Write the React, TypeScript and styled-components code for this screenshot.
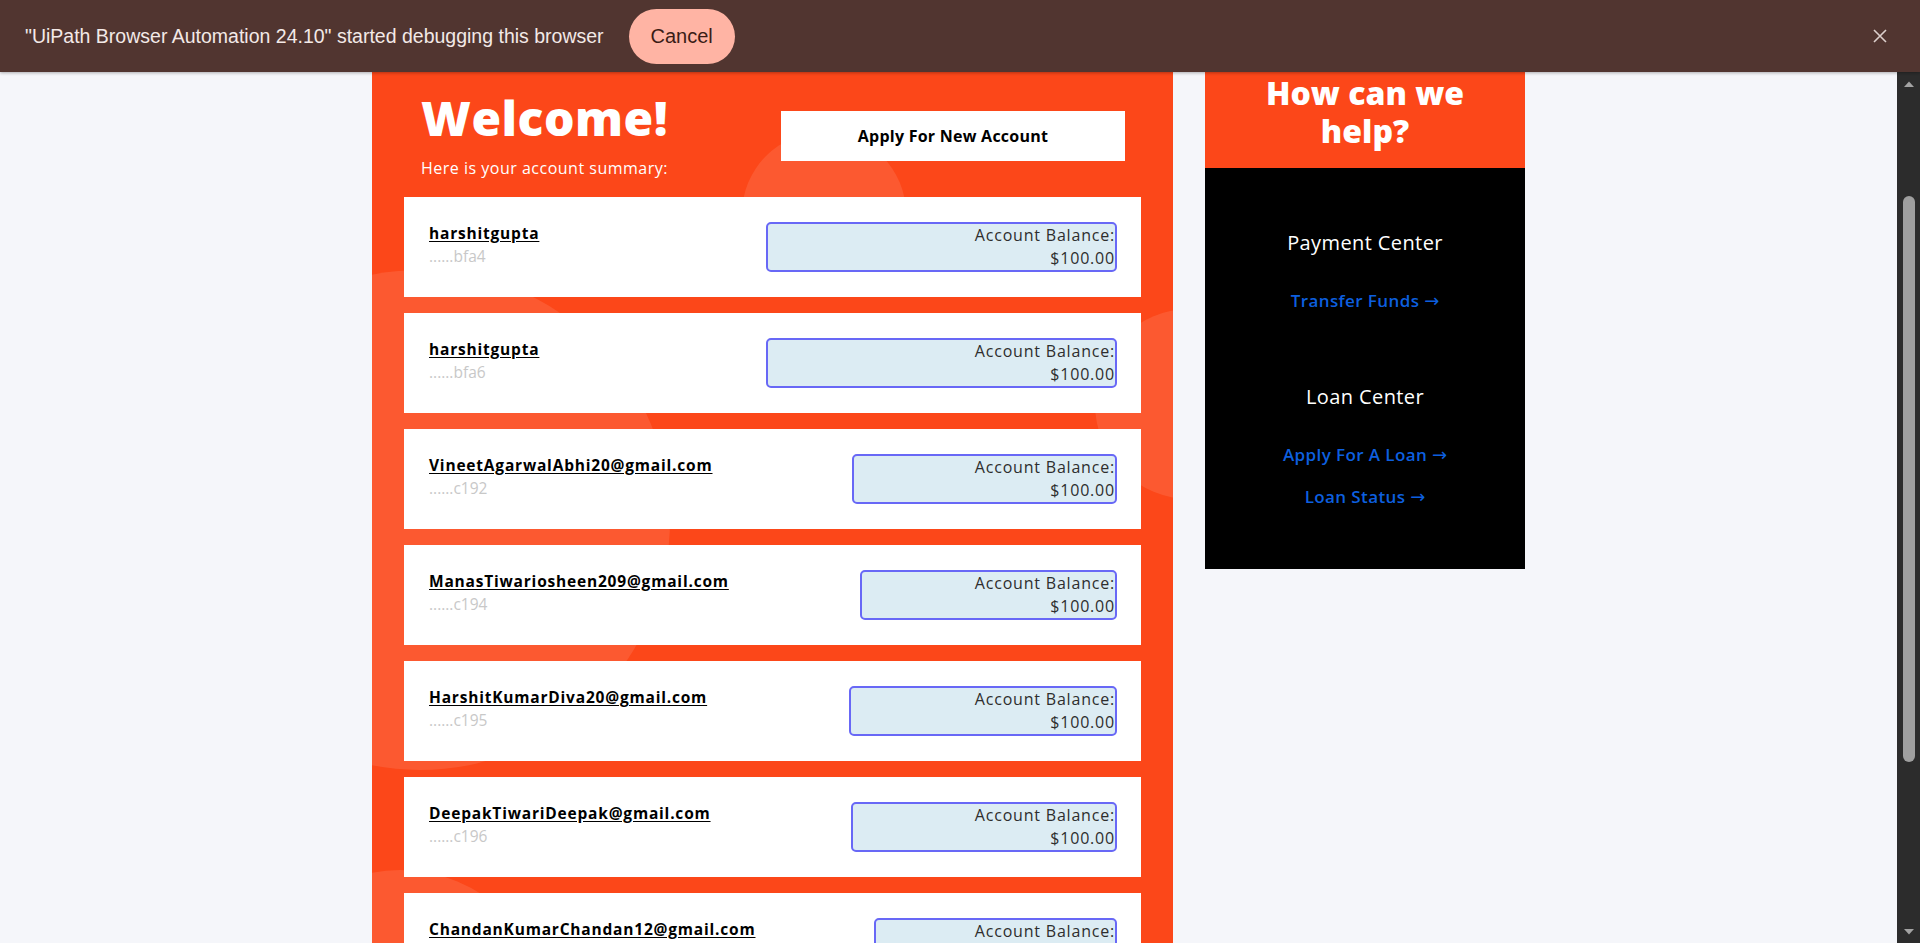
import React from "react";
import styled, { createGlobalStyle } from "styled-components";

const GlobalStyle = createGlobalStyle`
  html, body {
    margin: 0;
    padding: 0;
    height: 100%;
    overflow: hidden;
    background: #f5f6fa;
  }
  #root { height: 100%; }
  * { box-sizing: border-box; }
`;

const ORANGE = "#fc4719";
const UI_FONT = `"Open Sans", "Noto Sans", Arial, sans-serif`;

const Screen = styled.div`
  display: flex;
  flex-direction: column;
  height: 943px;
  width: 1920px;
`;

const InfoBar = styled.div`
  height: 72px;
  flex: none;
  background: #513530;
  display: flex;
  align-items: center;
  padding: 0 32px 0 25px;
  font-family: "Liberation Sans", Arial, sans-serif;
  font-size: 19.5px;
  color: #f3e9e7;
  position: relative;
  z-index: 2;
  box-shadow: 0 1px 3px rgba(0, 0, 0, 0.3);
`;

const InfoText = styled.span`
  white-space: nowrap;
`;

const CancelButton = styled.button`
  margin-left: 25px;
  width: 106px;
  height: 55px;
  border: none;
  border-radius: 28px;
  background: #ffb4a4;
  color: #3a1c16;
  font-family: "Liberation Sans", Arial, sans-serif;
  font-size: 20px;
  padding: 0;
`;

const CloseButton = styled.button`
  margin-left: auto;
  width: 16px;
  height: 16px;
  padding: 0;
  border: none;
  background: none;
  display: flex;
  align-items: center;
  justify-content: center;
`;

const Viewport = styled.div`
  flex: 1;
  display: flex;
  min-height: 0;
`;

const PageArea = styled.main`
  flex: 1;
  overflow: hidden;
  display: flex;
  justify-content: center;
  align-items: flex-start;
  gap: 32px;
  font-family: ${UI_FONT};
`;

const AccountsPanel = styled.section`
  width: 801px;
  flex: none;
  background: ${ORANGE};
  position: relative;
  overflow: hidden;
  padding: 18px 32px 60px 32px;
`;

const Bubble = styled.div<{ $x: number; $y: number; $size: number }>`
  position: absolute;
  left: ${(p) => p.$x}px;
  top: ${(p) => p.$y}px;
  width: ${(p) => p.$size}px;
  height: ${(p) => p.$size}px;
  border-radius: 50%;
  background: rgba(255, 255, 255, 0.1);
  pointer-events: none;
`;

const Header = styled.header`
  position: relative;
  display: flex;
  justify-content: space-between;
  align-items: flex-start;
  padding: 0 16px 0 17px;
`;

const Greeting = styled.div`
  color: #fff;
`;

const Title = styled.h1`
  margin: 0;
  font-size: 48px;
  line-height: 56px;
  font-weight: 800;
  letter-spacing: 0.5px;
`;

const Subtitle = styled.p`
  margin: 11px 0 0;
  font-size: 16px;
  line-height: 22px;
  font-weight: 400;
  letter-spacing: 0.5px;
`;

const NewAccountButton = styled.button`
  margin-top: 21px;
  width: 344px;
  height: 50px;
  border: none;
  background: #fff;
  color: #000;
  font-family: ${UI_FONT};
  font-size: 16px;
  font-weight: 700;
  letter-spacing: 0.25px;
  padding: 0;
`;

const CardList = styled.div`
  position: relative;
  margin-top: 18px;
  display: flex;
  flex-direction: column;
  gap: 16px;
`;

const Card = styled.div`
  background: #fff;
  height: 100px;
  padding: 25px 24px 25px 25px;
  display: flex;
  align-items: flex-start;
`;

const Owner = styled.div`
  flex: 1 1 auto;
  display: flex;
  flex-direction: column;
  align-items: flex-start;
  padding-right: 19px;
`;

const OwnerName = styled.a`
  font-size: 15.5px;
  line-height: 23px;
  font-weight: 700;
  letter-spacing: 0.8px;
  color: #000;
  text-decoration: underline;
  text-underline-offset: 2px;
  white-space: nowrap;
`;

const AccountId = styled.span`
  font-size: 15.5px;
  line-height: 23px;
  color: #c8c8c8;
`;

const Balance = styled.div`
  flex: 1 1 auto;
  border: 2px solid #6868f6;
  border-radius: 5px;
  background: #dcecf3;
  text-align: right;
  font-size: 16px;
  line-height: 23px;
  letter-spacing: 0.8px;
  color: #2e2e2e;
  white-space: nowrap;
`;

const Sidebar = styled.aside`
  width: 320px;
  flex: none;
`;

const HelpHeader = styled.div`
  background: ${ORANGE};
  color: #fff;
  text-align: center;
  font-size: 32px;
  line-height: 38px;
  font-weight: 800;
  padding: 2px 60px 18px;
`;

const HelpBody = styled.div`
  background: #000;
  padding: 61px 10px 60px;
  display: flex;
  flex-direction: column;
  align-items: center;
  gap: 70px;
`;

const HelpSection = styled.div`
  display: flex;
  flex-direction: column;
  align-items: center;
`;

const HelpTitle = styled.h3`
  margin: 0 0 32px;
  color: #fff;
  font-size: 20px;
  line-height: 28px;
  font-weight: 500;
  letter-spacing: 0.4px;
`;

const HelpLinks = styled.div`
  display: flex;
  flex-direction: column;
  align-items: center;
  gap: 18px;
`;

const HelpLink = styled.a`
  color: #0d5fdf;
  font-size: 17px;
  line-height: 24px;
  font-weight: 600;
  letter-spacing: 0.4px;
  text-decoration: none;
  white-space: nowrap;
`;

const Arrow = styled.span`
  font-family: "DejaVu Sans", sans-serif;
  font-weight: 400;
  font-size: 18px;
  letter-spacing: 0;
`;

const ScrollBar = styled.div`
  width: 23px;
  flex: none;
  background: #2c2c2c;
  display: flex;
  flex-direction: column;
  align-items: center;
  padding: 8px 0 7px;
`;

const ScrollThumb = styled.div`
  margin-top: 108px;
  width: 12px;
  height: 566px;
  border-radius: 6px;
  background: #9f9f9f;
`;

const ScrollSpacer = styled.div`
  flex: 1;
`;

const accounts = [
  { name: "harshitgupta", id: "......bfa4" },
  { name: "harshitgupta", id: "......bfa6" },
  { name: "VineetAgarwalAbhi20@gmail.com", id: "......c192" },
  { name: "ManasTiwariosheen209@gmail.com", id: "......c194" },
  { name: "HarshitKumarDiva20@gmail.com", id: "......c195" },
  { name: "DeepakTiwariDeepak@gmail.com", id: "......c196" },
  { name: "ChandanKumarChandan12@gmail.com", id: "......c197" },
];

const TriangleUp = () => (
  <svg width="12" height="8" viewBox="0 0 12 8">
    <path d="M1 7 L6 1.5 L11 7 Z" fill="#a3a3a3" />
  </svg>
);

const TriangleDown = () => (
  <svg width="12" height="8" viewBox="0 0 12 8">
    <path d="M1 1 L6 6.5 L11 1 Z" fill="#a3a3a3" />
  </svg>
);

export default function App() {
  return (
    <>
      <GlobalStyle />
      <Screen>
        <InfoBar>
          <InfoText>"UiPath Browser Automation 24.10" started debugging this browser</InfoText>
          <CancelButton>Cancel</CancelButton>
          <CloseButton aria-label="Close">
            <svg width="14" height="14" viewBox="0 0 14 14">
              <path d="M1 1 L13 13 M13 1 L1 13" stroke="#dccfcc" strokeWidth="1.6" />
            </svg>
          </CloseButton>
        </InfoBar>
        <Viewport>
          <PageArea>
            <AccountsPanel>
              <Bubble $x={370} $y={60} $size={164} />
              <Bubble $x={-202} $y={198} $size={500} />
              <Bubble $x={723} $y={237} $size={190} />
              <Bubble $x={-122} $y={798} $size={300} />
              <Header>
                <Greeting>
                  <Title>Welcome!</Title>
                  <Subtitle>Here is your account summary:</Subtitle>
                </Greeting>
                <NewAccountButton>Apply For New Account</NewAccountButton>
              </Header>
              <CardList>
                {accounts.map((a, i) => (
                  <Card key={i}>
                    <Owner>
                      <OwnerName href="#">{a.name}</OwnerName>
                      <AccountId>{a.id}</AccountId>
                    </Owner>
                    <Balance>
                      Account Balance:
                      <br />
                      $100.00
                    </Balance>
                  </Card>
                ))}
              </CardList>
            </AccountsPanel>
            <Sidebar>
              <HelpHeader>How can we help?</HelpHeader>
              <HelpBody>
                <HelpSection>
                  <HelpTitle>Payment Center</HelpTitle>
                  <HelpLinks>
                    <HelpLink href="#">
                      Transfer Funds <Arrow>→</Arrow>
                    </HelpLink>
                  </HelpLinks>
                </HelpSection>
                <HelpSection>
                  <HelpTitle>Loan Center</HelpTitle>
                  <HelpLinks>
                    <HelpLink href="#">
                      Apply For A Loan <Arrow>→</Arrow>
                    </HelpLink>
                    <HelpLink href="#">
                      Loan Status <Arrow>→</Arrow>
                    </HelpLink>
                  </HelpLinks>
                </HelpSection>
              </HelpBody>
            </Sidebar>
          </PageArea>
          <ScrollBar>
            <TriangleUp />
            <ScrollThumb />
            <ScrollSpacer />
            <TriangleDown />
          </ScrollBar>
        </Viewport>
      </Screen>
    </>
  );
}
